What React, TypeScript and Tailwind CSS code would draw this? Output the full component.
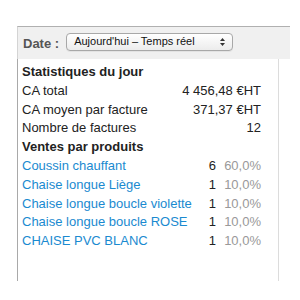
import React from "react";

const products = [
  { name: "Coussin chauffant", n: 6, p: "60,0%" },
  { name: "Chaise longue Liège", n: 1, p: "10,0%" },
  { name: "Chaise longue boucle violette", n: 1, p: "10,0%" },
  { name: "Chaise longue boucle ROSE", n: 1, p: "10,0%" },
  { name: "CHAISE PVC BLANC", n: 1, p: "10,0%" },
];

export default function App() {
  return (
    <div
      className="w-[300px] h-[300px] bg-white pt-[26px] pl-[17px] overflow-hidden"
      style={{ fontFamily: '"Liberation Sans", Arial, sans-serif' }}
    >
      <div className="w-[273px] h-[33px] bg-[#f0f0f0] border-t border-t-[#b0b0b0] border-l border-l-[#d4d4d4] flex items-center pl-[5px]">
        <span className="text-[13px] font-bold text-[#555] mr-[7px] leading-none">Date :</span>
        <div className="w-[167px] h-[18px] rounded-[4px] border border-[#a8a8a8] bg-gradient-to-b from-white to-[#ececec] flex items-center pl-[7px] pr-[6px] mt-[-3px] shadow-[0_1px_0_rgba(0,0,0,0.05)]">
          <span className="text-[11px] text-[#111] leading-none flex-1">Aujourd'hui – Temps réel</span>
          <svg width="7" height="10" viewBox="0 0 7 10">
            <path d="M3.5 1 L6 4 L1 4 Z" fill="#333" />
            <path d="M3.5 9 L6 6 L1 6 Z" fill="#333" />
          </svg>
        </div>
      </div>
      <div className="w-[262px] h-[222px] border-l border-l-[#a9a9a9] border-r border-r-[#dcdcdc] pl-[4px] pr-[17px] pt-[4px] text-[13px] leading-[18.8px] text-[#222]">
        <div className="font-bold">Statistiques du jour</div>
        <div className="flex justify-between">
          <span>CA total</span>
          <span>4 456,48 €HT</span>
        </div>
        <div className="flex justify-between">
          <span>CA moyen par facture</span>
          <span>371,37 €HT</span>
        </div>
        <div className="flex justify-between">
          <span>Nombre de factures</span>
          <span>12</span>
        </div>
        <div className="font-bold">Ventes par produits</div>
        {products.map((p) => (
          <div key={p.name} className="flex">
            <span className="flex-1 text-[#1a8ad0] whitespace-nowrap">{p.name}</span>
            <span className="text-right">{p.n}</span>
            <span className="w-[45px] text-right text-[#999]">{p.p}</span>
          </div>
        ))}
      </div>
    </div>
  );
}
